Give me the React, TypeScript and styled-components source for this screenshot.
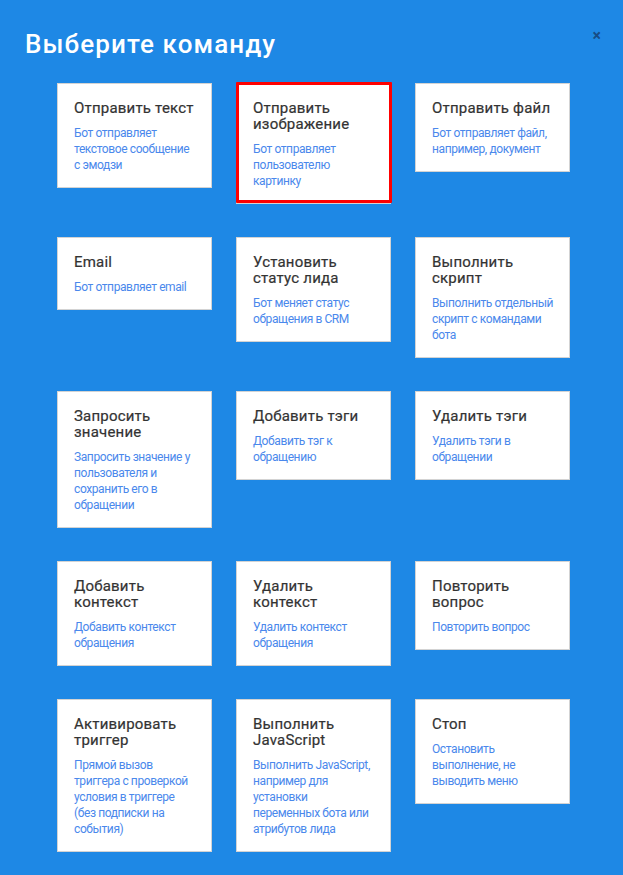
import React from "react";
import styled, { createGlobalStyle } from "styled-components";

const Global = createGlobalStyle`
  html, body {
    margin: 0;
    padding: 0;
    background: #1e88e5;
  }
  body {
    font-family: Roboto, "Noto Sans", Arial, sans-serif;
  }
`;

const Page = styled.div`
  min-height: 875px;
  background: #1e88e5;
  position: relative;
  box-sizing: border-box;
  padding: 29px 0 20px;
`;

const Title = styled.h1`
  margin: 0 0 24px 25px;
  font-family: Roboto, Arial, sans-serif;
  font-size: 26px;
  line-height: 30px;
  font-weight: 500;
  color: #ffffff;
  letter-spacing: 1.1px;
`;

const Close = styled.button`
  position: absolute;
  top: 28px;
  right: 22px;
  border: none;
  background: transparent;
  padding: 0;
  cursor: pointer;
  font-family: Roboto, Arial, sans-serif;
  font-size: 16px;
  line-height: 16px;
  font-weight: 700;
  color: rgba(20, 50, 90, 0.7);
`;

const Grid = styled.div`
  display: grid;
  grid-template-columns: repeat(3, 155px);
  column-gap: 24px;
  row-gap: 33px;
  align-items: start;
  padding-left: 57px;
`;

const Card = styled.div<{ $selected?: boolean }>`
  position: relative;
  background: #ffffff;
  border: 1px solid #d3d3d3;
  padding: 16px 15px 14px 16px;
  display: flex;
  flex-direction: column;
  gap: 9px;
  cursor: pointer;

  &::after {
    content: "";
    display: ${(p) => (p.$selected ? "block" : "none")};
    position: absolute;
    top: -2px;
    left: -1px;
    right: -2px;
    bottom: 0;
    border: 3px solid #ff0000;
    border-radius: 1px;
    pointer-events: none;
  }
`;

const CardTitle = styled.div`
  font-family: Roboto, Arial, sans-serif;
  font-size: 15px;
  line-height: 16px;
  font-weight: 400;
  letter-spacing: 0.2px;
  color: #333333;
  -webkit-text-stroke: 0.2px #333333;
`;

const CardDesc = styled.div`
  font-family: Roboto, Arial, sans-serif;
  font-size: 12px;
  line-height: 16px;
  font-weight: 400;
  letter-spacing: -0.4px;
  color: #4a88ec;
`;

type Cmd = { title: string; desc: string; selected?: boolean };

const commands: Cmd[] = [
  { title: "Отправить текст", desc: "Бот отправляет текстовое сообщение с эмодзи" },
  { title: "Отправить изображение", desc: "Бот отправляет пользователю картинку", selected: true },
  { title: "Отправить файл", desc: "Бот отправляет файл, например, документ" },
  { title: "Email", desc: "Бот отправляет email" },
  { title: "Установить статус лида", desc: "Бот меняет статус обращения в CRM" },
  { title: "Выполнить скрипт", desc: "Выполнить отдельный скрипт с командами бота" },
  { title: "Запросить значение", desc: "Запросить значение у пользователя и сохранить его в обращении" },
  { title: "Добавить тэги", desc: "Добавить тэг к обращению" },
  { title: "Удалить тэги", desc: "Удалить тэги в обращении" },
  { title: "Добавить контекст", desc: "Добавить контекст обращения" },
  { title: "Удалить контекст", desc: "Удалить контекст обращения" },
  { title: "Повторить вопрос", desc: "Повторить вопрос" },
  { title: "Активировать триггер", desc: "Прямой вызов триггера с проверкой условия в триггере (без подписки на события)" },
  { title: "Выполнить JavaScript", desc: "Выполнить JavaScript, например для установки переменных бота или атрибутов лида" },
  { title: "Стоп", desc: "Остановить выполнение, не выводить меню" },
];

export default function App() {
  return (
    <Page>
      <Global />
      <Title>Выберите команду</Title>
      <Close aria-label="Закрыть">×</Close>
      <Grid>
        {commands.map((c) => (
          <Card key={c.title} $selected={c.selected}>
            <CardTitle>{c.title}</CardTitle>
            <CardDesc>{c.desc}</CardDesc>
          </Card>
        ))}
      </Grid>
    </Page>
  );
}
